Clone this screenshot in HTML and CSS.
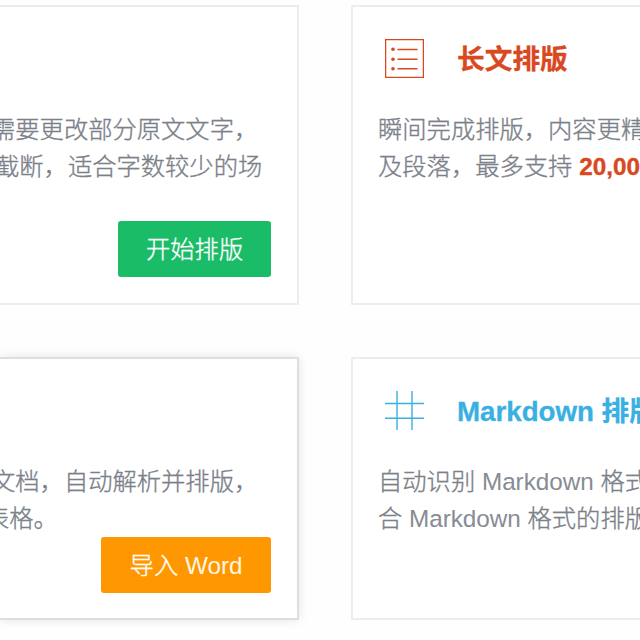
FILE: index.html
```html
<!DOCTYPE html>
<html lang="zh-CN">
<head>
<meta charset="utf-8">
<title>排版</title>
<link rel="stylesheet" href="styles.css">
</head>
<body>
<main class="cards">
  <section class="card card-left">
    <p class="desc"><span class="line">需要更改部分原文文字，</span><span class="line line-wide">截断，适合字数较少的场</span></p>
    <button class="btn btn-green">开始排版</button>
  </section>
  <section class="card card-right">
    <header class="head red">
      <svg class="icon" viewBox="0 0 39 39" fill="none" stroke="currentColor">
        <path d="M.6 .6H38.4V38.4H.6Z" stroke-width="1.3"/>
        <path d="M12.5 10.5H32.5M12.5 20.2H32.5M12.5 29.8H32.5" stroke-width="1.4"/>
        <g fill="currentColor" stroke="none"><circle cx="8" cy="10.3" r="1.8"/><circle cx="8" cy="20.2" r="1.8"/><circle cx="8" cy="29.7" r="1.8"/></g>
      </svg>
      <h2>长文排版</h2>
    </header>
    <p class="desc"><span class="line">瞬间完成排版，内容更精准</span><span class="line">及段落，最多支持 <b class="red">20,000</b></span></p>
  </section>
  <section class="card card-left card-active">
    <p class="desc"><span class="line">文档，自动解析并排版，</span><span class="line line-table">表格。</span></p>
    <button class="btn btn-orange">导入 <span class="latin">Word</span></button>
  </section>
  <section class="card card-right">
    <header class="head blue">
      <svg class="icon" viewBox="0 0 39 39" fill="none" stroke="currentColor" stroke-width="1.4">
        <path d="M12 0V39M27 0V39M0 12.5H39M0 27.3H39"/>
      </svg>
      <h2>Markdown 排版</h2>
    </header>
    <p class="desc"><span class="line">自动识别 <span class="latin">Markdown</span> 格式</span><span class="line">合 <span class="latin">Markdown</span> 格式的排版</span></p>
  </section>
</main>
</body>
</html>
```
FILE: styles.css
```css
* { box-sizing: border-box; }
html { overflow: hidden; }
body {
  margin: 0;
  height: 640px;
  overflow: hidden;
  background: #fefefe;
  font-family: "Liberation Sans", "Noto Sans CJK SC", sans-serif;
  font-size: 24.3px;
  color: #7b8089;
}
.cards {
  display: grid;
  grid-template-columns: 299px 289px;
  grid-template-rows: 300px 263px;
  gap: 52px;
  padding-top: 5px;
}
.card {
  border: 2px solid #ededed;
  background: #fff;
  display: flex;
  flex-direction: column;
}
.card-left {
  border-left: 0;
  padding: 105px 26px 0 0;
}
.card-right {
  border-right: 0;
  padding: 32px 0 0 25px;
  overflow: hidden;
}
.card-active {
  border-color: #dedede;
  box-shadow: 0 0 10px rgba(0, 0, 0, .1);
}
.head {
  display: flex;
  align-items: center;
  gap: 33px;
  height: 39px;
  padding-left: 7px;
  margin-bottom: 34px;
}
.icon { width: 39px; height: 39px; flex: none; }
h2 {
  margin: 3px 0 0;
  font-size: 27.7px;
  line-height: 40px;
  font-weight: 700;
  white-space: nowrap;
  -webkit-text-stroke: .3px currentColor;
}
.desc {
  margin: 0;
  font-weight: 300;
  line-height: 36.5px;
  white-space: nowrap;
  -webkit-text-stroke: .35px currentColor;
}
.desc b { font-weight: 700; }
.latin { -webkit-text-stroke: 0; opacity: .9; letter-spacing: -.05px; }
.line { display: block; }
.card-left .line { margin-left: -9px; }
.card-left .line-wide { margin-left: -5px; }
.card-left .line-table { margin-left: -15px; }
.red { color: #d9481f; }
.blue { color: #39b0e2; }
.btn {
  align-self: flex-end;
  height: 56px;
  padding: 0 28px 4px;
  border: 0;
  border-radius: 3px;
  color: #fff;
  font: inherit;
  font-weight: 300;
  white-space: nowrap;
  -webkit-text-stroke: .3px currentColor;
}
.btn-green { margin-top: 36px; width: 153px; background: #1abc68; }
.btn-orange { width: 170px; background: #ff9800; }
```
